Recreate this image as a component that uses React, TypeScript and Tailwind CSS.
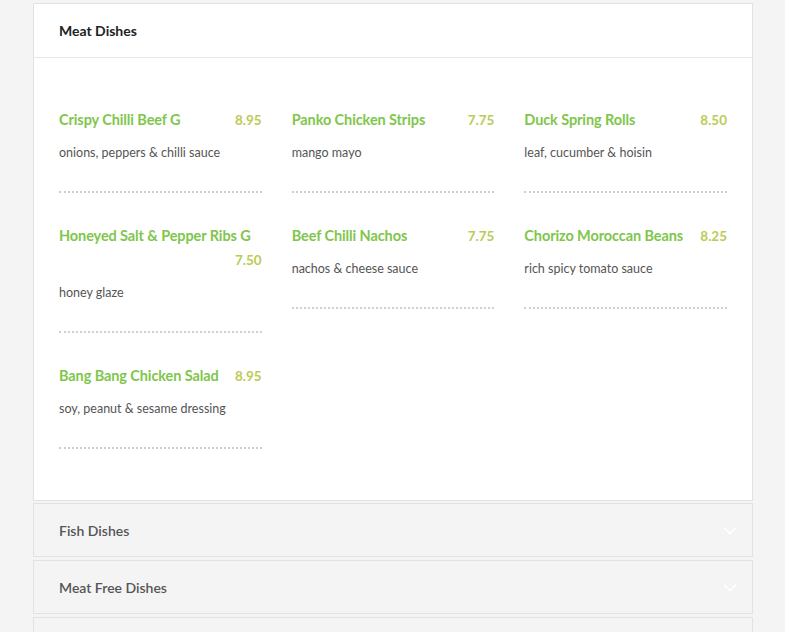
import React from "react";

type Dish = {
  name: string;
  price: string;
  desc: string;
};

const meatDishes: Dish[] = [
  { name: "Crispy Chilli Beef G", price: "8.95", desc: "onions, peppers & chilli sauce" },
  { name: "Panko Chicken Strips", price: "7.75", desc: "mango mayo" },
  { name: "Duck Spring Rolls", price: "8.50", desc: "leaf, cucumber & hoisin" },
  { name: "Honeyed Salt & Pepper Ribs G", price: "7.50", desc: "honey glaze" },
  { name: "Beef Chilli Nachos", price: "7.75", desc: "nachos & cheese sauce" },
  { name: "Chorizo Moroccan Beans", price: "8.25", desc: "rich spicy tomato sauce" },
  { name: "Bang Bang Chicken Salad", price: "8.95", desc: "soy, peanut & sesame dressing" },
];

const otherSections = ["Fish Dishes", "Meat Free Dishes", ""];

const DishItem: React.FC<{ dish: Dish }> = ({ dish }) => (
  <div className="mb-[31px] border-b-2 border-dotted border-[#cfcfcf] pb-[28px]">
    <div className="flex flex-wrap items-center justify-between">
      <span className="text-[14.5px] font-bold leading-6 text-[#80c64c] tracking-[-0.1px]">
        {dish.name}
      </span>
      <span className="ml-auto text-[13.5px] font-bold leading-6 text-[#bccb55]">
        {dish.price}
      </span>
    </div>
    <p className="mt-[11px] text-[12.5px] leading-5 text-[#555]">{dish.desc}</p>
  </div>
);

const Chevron = () => (
  <svg width="14" height="9" viewBox="0 0 14 9" fill="none">
    <path d="M1 1.5l6 6 6-6" stroke="#ffffff" strokeWidth="1.6" />
  </svg>
);

export default function App() {
  return (
    <div
      className="h-[632px] overflow-hidden bg-[#f4f4f4] pl-[33px] pr-[32px] pt-[3px]"
      style={{ fontFamily: "Lato, 'Open Sans', sans-serif" }}
    >
      <div className="border border-[#e2e2e2] bg-white">
        <div className="flex h-[54px] items-center border-b border-[#e6e6e6] px-[25px]">
          <h2 className="text-[14px] font-bold text-[#222]">Meat Dishes</h2>
        </div>
        <div className="grid grid-cols-3 items-start gap-x-[30px] px-[25px] pt-[50px] pb-[20px]">
          {meatDishes.map((dish) => (
            <DishItem key={dish.name} dish={dish} />
          ))}
        </div>
      </div>

      <div className="mt-[2px] flex flex-col gap-[3px]">
        {otherSections.map((title, i) => (
          <div
            key={i}
            className="flex h-[54px] items-center justify-between border border-[#e2e2e2] bg-[#f4f4f4] px-[25px]"
          >
            <span className="text-[14px] font-semibold text-[#555]">{title}</span>
            <span className="mr-[-10px]">
              <Chevron />
            </span>
          </div>
        ))}
      </div>
    </div>
  );
}
